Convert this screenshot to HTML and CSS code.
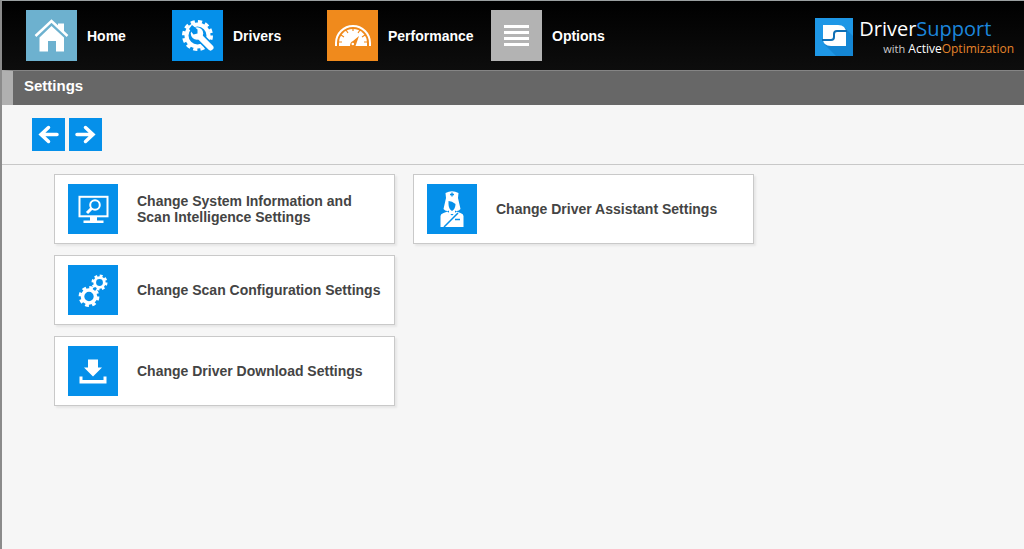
FILE: index.html
```html
<!DOCTYPE html>
<html lang="en">
<head>
    <meta charset="UTF-8">
    <meta name="viewport" content="width=device-width, initial-scale=1.0">
    <title>Settings</title>
    <link rel="stylesheet" href="styles.css">
</head>
<body>
    <header class="header">
        <nav class="nav">
            <a class="nav-item" href="#home">
                <svg class="nav-icon home" viewBox="0 0 51 51">
                    <path d="M9.500 26 L25.500 11 L41.500 26" fill="none" stroke="#fff" stroke-width="2.500"/>
                    <path d="M32 13.500h6v9l-6-5.600z" fill="#fff"/>
                    <path d="M13.500 27.500 L25.500 16 L38 27.500 V41.500 H30 V31 H22 V41.500 H13.500z" fill="#fff"/>
                </svg>
                Home
            </a>
            <a class="nav-item" href="#drivers">
                <svg class="nav-icon drivers" viewBox="0 0 51 51">
                    <circle cx="25.500" cy="25.500" r="14" fill="none" stroke="#fff" stroke-width="3" stroke-dasharray="4.200 3.130"/>
                    <circle cx="25.500" cy="25.500" r="11" fill="none" stroke="#fff" stroke-width="4"/>
                    <path d="M27 26 L38 37" stroke="#0590ea" stroke-width="9" stroke-linecap="round"/>
                    <path d="M25 24 L38.500 37.500" stroke="#fff" stroke-width="6" stroke-linecap="round"/>
                    <circle cx="25" cy="23.500" r="6.200" fill="#fff"/>
                    <path d="M17 19 L20 15 L25.500 19.500 L25.500 23.500 L21.500 24.500z" fill="#0590ea"/>
                </svg>
                Drivers
            </a>
            <a class="nav-item" href="#performance">
                <svg class="nav-icon performance" viewBox="0 0 51 51">
                    <path d="M9 36 V33 A16.500 16.500 0 0 1 43 33 V36" fill="none" stroke="#fff" stroke-width="2"/>
                    <path d="M12 36 V33 A14 14 0 0 1 40 33 V36z" fill="#fff"/>
                    <path d="M12 32h3 M37 32h3 M14 25l3 2 M38 25l-3 2 M19 20l2 3 M33 20l-2 3 M26 18v3" stroke="#f08a1c" stroke-width="1.200"/>
                    <path d="M32 26 L28.500 36 H23 Q23 32 26 31z" fill="#f08a1c"/>
                    <circle cx="25.800" cy="34" r="1.300" fill="#fff"/>
                </svg>
                Performance
            </a>
            <a class="nav-item" href="#options">
                <svg class="nav-icon options" viewBox="0 0 51 51">
                    <path d="M13 16.500h25 M13 22.500h25 M13 28.500h25 M13 34.500h25" stroke="#fff" stroke-width="3.200"/>
                </svg>
                Options
            </a>
        </nav>
        <div class="logo">
            <svg class="logo-icon" viewBox="0 0 38 38">
                <rect width="38" height="38" fill="#1e97e6"/>
                <path d="M9 26 L29 9 L38 18 V38 H21z" fill="#1486d4"/>
                <path d="M8 7h15q8 0 8 8v13H16q-8 0-8-7z" fill="#fff"/>
                <path d="M32 13H22a3 3 0 0 0-3 3V19a3 3 0 0 1-3 3H7" fill="none" stroke="#0f6fb5" stroke-width="2"/>
            </svg>
            <div class="logo-text">
                <div class="logo-name">Driver<span class="blue">Support</span></div>
                <div class="logo-tag"><small>with</small> Active<span class="orange">Optimization</span></div>
            </div>
        </div>
    </header>

    <h1 class="title">Settings</h1>

    <div class="toolbar">
        <button class="arrow" type="button" aria-label="Back">
            <svg viewBox="0 0 33 33"><path d="M25 16.500H9 M16.500 9.500L9 16.500l7.500 7" /></svg>
        </button>
        <button class="arrow" type="button" aria-label="Forward">
            <svg viewBox="0 0 33 33"><path d="M8 16.500H24 M16.500 9.500L24 16.500l-7.500 7" /></svg>
        </button>
    </div>

    <main class="cards">
        <button class="card" type="button">
            <svg class="card-icon" viewBox="0 0 50 50">
                <rect x="11.500" y="12.800" width="28" height="19.500" fill="none" stroke="#fff" stroke-width="2"/>
                <path d="M22 33h7v3.500h6.500v2.500h-20v-2.500H22z" fill="#fff"/>
                <circle cx="27" cy="21" r="4.800" fill="none" stroke="#fff" stroke-width="2"/>
                <path d="M23.500 24.500L19 29" stroke="#fff" stroke-width="3"/>
            </svg>
            <span>Change System Information and Scan Intelligence Settings</span>
        </button>
        <button class="card" type="button">
            <svg class="card-icon" viewBox="0 0 50 50">
                <path d="M18.500 9 Q25 5.500 31.500 9 L31 14 L33.500 25 Q31 28 28 26.500 V30 H22 V26.500 Q19 28 16.500 25 L19 14z" fill="#fff"/>
                <path d="M21.500 20 V17 Q25 17 28.500 20 Q28.500 25 25 27 Q21.500 25 21.500 20z" fill="#0590ea"/>
                <path d="M25 8.500v4 M23 10.500h4" stroke="#0590ea" stroke-width="1.300"/>
                <path d="M13.500 43V32q0-2 3-3l4-1.500 4.500 4 4.500-4 4 1.500q3 1 3 3V43z" fill="#fff"/>
                <path d="M17 43L31 29 M28 35.500h5" stroke="#0590ea" stroke-width="1.500"/>
            </svg>
            <span>Change Driver Assistant Settings</span>
        </button>
        <button class="card" type="button">
            <svg class="card-icon" viewBox="0 0 50 50">
                <g fill="none" stroke="#fff">
                    <circle cx="21" cy="31.500" r="6.500" stroke-width="3.600"/>
                    <circle cx="21" cy="31.500" r="9" stroke-width="2.800" stroke-dasharray="3.800 3.268"/>
                    <circle cx="31.500" cy="17.500" r="4.800" stroke-width="2.800"/>
                    <circle cx="31.500" cy="17.500" r="6.800" stroke-width="2.400" stroke-dasharray="2.900 2.440"/>
                </g>
            </svg>
            <span>Change Scan Configuration Settings</span>
        </button>
        <button class="card new-row" type="button">
            <svg class="card-icon" viewBox="0 0 50 50">
                <path d="M20 13.500h10v8h4L25 30.500l-9-9h4z" fill="#fff"/>
                <path d="M11.500 30.500h3V34h21v-3.500h3v7h-27z" fill="#fff"/>
            </svg>
            <span>Change Driver Download Settings</span>
        </button>
    </main>
</body>
</html>
```
FILE: styles.css
```css
* {
    box-sizing: border-box;
}
body {
    margin: 0;
    min-height: 100vh;
    background-color: #f6f6f6;
    border-left: 2px solid #8b8b8b;
    border-top: 1px solid #9a9fa0;
    font-family: "Liberation Sans", Arial, sans-serif;
    font-size: 14px;
    font-weight: bold;
}
svg {
    display: block;
    flex: none;
}

.header {
    display: flex;
    justify-content: space-between;
    height: 69px;
    padding: 9px 10px 0 24px;
    background: linear-gradient(#000, #0d0d0d);
}
.nav {
    display: grid;
    grid-template-columns: 146px 155px 164px auto;
    align-items: start;
}
.nav-item {
    display: flex;
    align-items: center;
    gap: 10px;
    color: #fff;
    text-decoration: none;
}
.nav-icon {
    width: 51px;
    height: 51px;
}
.home {
    background-color: #6db1cf;
}
.drivers {
    background-color: #0590ea;
}
.performance {
    background-color: #f08a1c;
}
.options {
    background-color: #b3b3b3;
}

.logo {
    display: flex;
    gap: 6px;
    padding-top: 8px;
    font-family: "Open Sans", "Noto Sans", sans-serif;
    font-weight: normal;
    color: #fff;
}
.logo-icon {
    width: 38px;
    height: 38px;
}
.logo-name {
    font-size: 20px;
    line-height: 22px;
}
.logo-tag {
    padding-left: 24px;
    font-size: 12px;
    line-height: 18px;
}
.logo-tag small {
    font-size: 11px;
    color: #ccc;
}
.blue {
    color: #1c86dc;
}
.orange {
    color: #e5832a;
}

.title {
    height: 35px;
    margin: 0;
    padding: 0 11px;
    border-left: 11px solid #b0b0b0;
    border-top: 1px solid #858585;
    background-color: #676767;
    color: #fff;
    font-size: 15px;
    line-height: 30px;
}

.toolbar {
    display: flex;
    gap: 4px;
    padding: 13px 30px;
    border-bottom: 1px solid #c8c8c8;
}
.arrow {
    width: 33px;
    height: 33px;
    padding: 0;
    border: none;
    background-color: #0590ea;
}
.arrow path {
    fill: none;
    stroke: #fff;
    stroke-width: 3.5;
    stroke-linecap: round;
}

.cards {
    display: grid;
    grid-template-columns: repeat(auto-fill, 341px);
    gap: 11px 18px;
    padding: 9px 200px 20px 52px;
}
.card {
    display: flex;
    align-items: center;
    gap: 19px;
    height: 70px;
    padding: 0 8px 0 13px;
    border: 1px solid #c9c9c9;
    background-color: #fff;
    box-shadow: 2px 2px 2px #e6e6e6;
    color: #444;
    font: inherit;
    line-height: 16px;
    text-align: left;
}
.card-icon {
    width: 50px;
    height: 50px;
    background-color: #0590ea;
}
.new-row {
    grid-column-start: 1;
}
```
